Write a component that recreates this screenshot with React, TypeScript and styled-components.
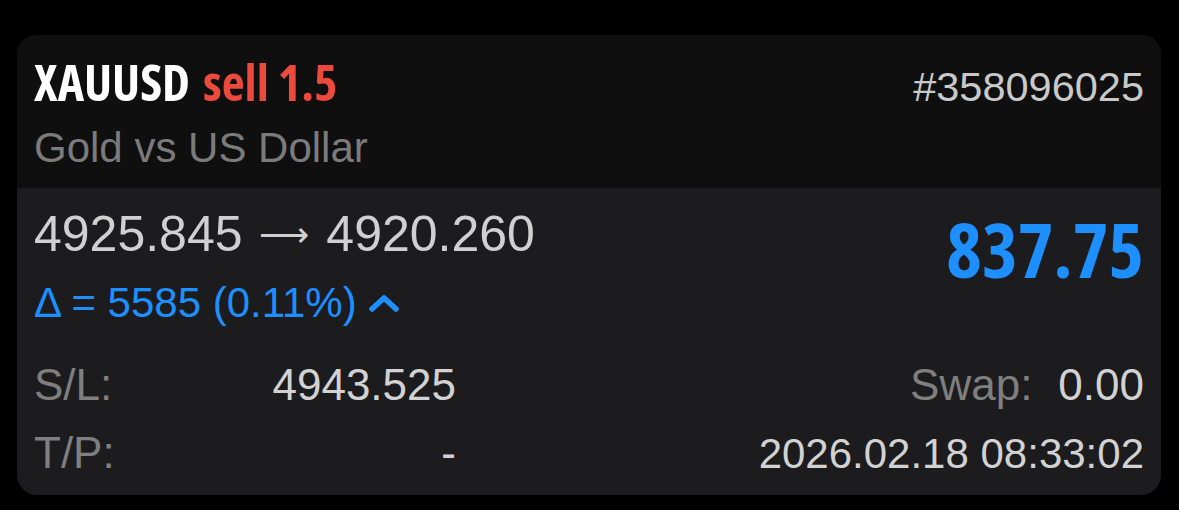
import React from 'react';
import styled, { createGlobalStyle } from 'styled-components';

const Global = createGlobalStyle`
  html, body {
    margin: 0;
    padding: 0;
    background: #000;
  }
  body {
    font-family: "Liberation Sans", Arial, sans-serif;
  }
`

const Page = styled.div`
  width: 1179px;
  height: 510px;
  padding: 35px 18px 15px 17px;
  box-sizing: border-box;
`

const Card = styled.div`
  height: 460px;
  border-radius: 20px;
  overflow: hidden;
  background: #1c1c1e;
  display: flex;
  flex-direction: column;
`

const Header = styled.div`
  background: #0f0f0f;
  height: 153px;
  box-sizing: border-box;
  padding: 19px 17px 0 17px;
`

const TopRow = styled.div`
  display: flex;
  justify-content: space-between;
  align-items: baseline;
`

const Title = styled.div`
  font-family: "Open Sans", sans-serif;
  font-stretch: 78%;
  font-weight: 700;
  font-size: 50px;
  line-height: 56px;
  color: #fff;
`

const Side = styled.span`
  color: #ec4a3c;
  margin-left: 4px;
`

const Ticket = styled.div`
  font-size: 41.5px;
  color: #c9c9c9;
`

const Subtitle = styled.div`
  font-size: 42px;
  line-height: 50px;
  margin-top: 12px;
  color: #7b7b7b;
`

const Body = styled.div`
  flex: 1;
  padding: 18px 17px 0 17px;
  display: flex;
  flex-direction: column;
`

const PriceRow = styled.div`
  display: flex;
  justify-content: space-between;
  align-items: flex-start;
`

const Prices = styled.div`
  font-size: 50px;
  line-height: 56px;
  color: #d0d0d0;
`

const Arrow = styled.span`
  font-size: 35px;
  vertical-align: 0.12em;
  margin: 0 3px;
`

const Delta = styled.div`
  display: flex;
  align-items: center;
  gap: 12px;
  font-size: 42px;
  line-height: 50px;
  margin-top: 15px;
  color: #1e8fff;
`

const Profit = styled.div`
  font-family: "Open Sans", sans-serif;
  font-stretch: 75%;
  font-weight: 700;
  font-size: 76px;
  line-height: 80px;
  margin-top: 3px;
  color: #1e8fff;
`

const InfoRow = styled.div<{ $first?: boolean }>`
  display: flex;
  justify-content: space-between;
  align-items: baseline;
  font-size: 44px;
  line-height: 68px;
  margin-top: ${p => (p.$first ? '23px' : '0')};
`

const Pair = styled.div<{ $width?: number }>`
  display: flex;
  justify-content: space-between;
  gap: 26px;
  width: ${p => (p.$width ? `${p.$width}px` : 'auto')};
`

const Label = styled.span`
  color: #7f7f7f;
`

const Value = styled.span<{ $small?: boolean }>`
  color: #d2d2d2;
  font-size: ${p => (p.$small ? '42px' : 'inherit')};
`

function ChevronUp() {
  return (
    <svg width="30" height="20" viewBox="0 0 30 20">
      <path d="M3 16 L15 5 L27 16" fill="none" stroke="#1e8fff" strokeWidth="5.5" strokeLinecap="round" strokeLinejoin="round" />
    </svg>
  )
}

export default function App() {
  return (
    <Page>
      <Global />
      <Card>
        <Header>
          <TopRow>
            <Title>XAUUSD <Side>sell 1.5</Side></Title>
            <Ticket>#358096025</Ticket>
          </TopRow>
          <Subtitle>Gold vs US Dollar</Subtitle>
        </Header>
        <Body>
          <PriceRow>
            <div>
              <Prices>4925.845 <Arrow>⟶</Arrow> 4920.260</Prices>
              <Delta>Δ = 5585 (0.11%) <ChevronUp /></Delta>
            </div>
            <Profit>837.75</Profit>
          </PriceRow>
          <InfoRow $first>
            <Pair $width={422}><Label>S/L:</Label><Value>4943.525</Value></Pair>
            <Pair><Label>Swap:</Label><Value>0.00</Value></Pair>
          </InfoRow>
          <InfoRow>
            <Pair $width={422}><Label>T/P:</Label><Value>-</Value></Pair>
            <Value $small>2026.02.18 08:33:02</Value>
          </InfoRow>
        </Body>
      </Card>
    </Page>
  )
}
